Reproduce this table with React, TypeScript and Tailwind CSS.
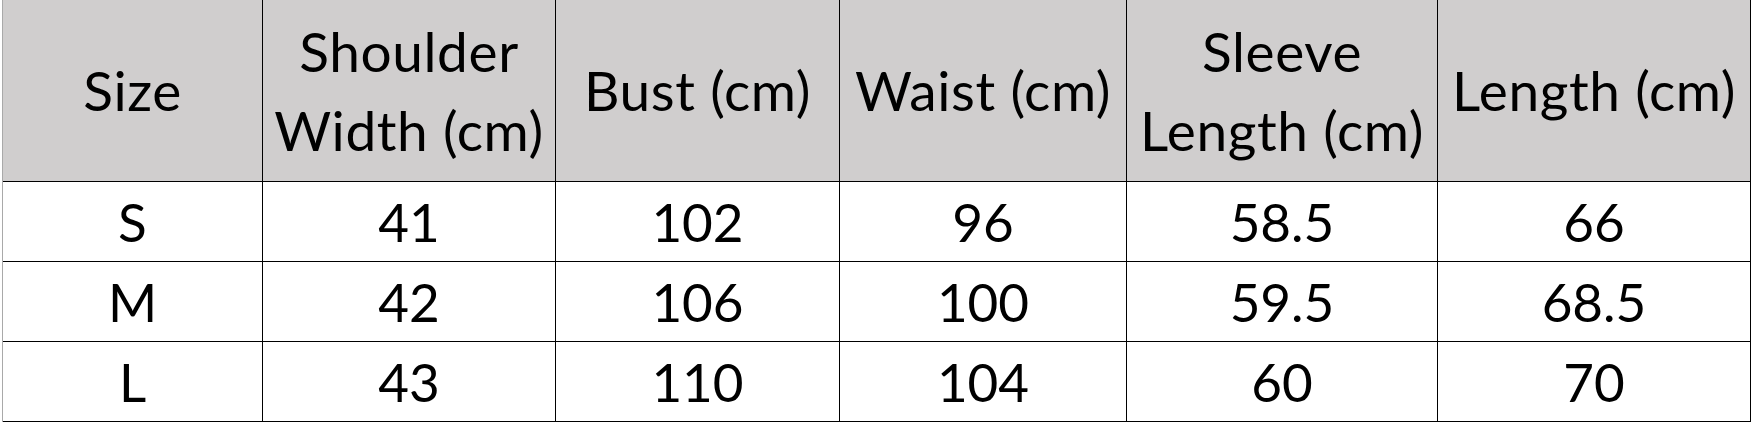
const headers = [
  ['Size'],
  ['Shoulder', 'Width (cm)'],
  ['Bust (cm)'],
  ['Waist (cm)'],
  ['Sleeve', 'Length (cm)'],
  ['Length (cm)'],
];

const rows = [
  ['S', '41', '102', '96', '58.5', '66'],
  ['M', '42', '106', '100', '59.5', '68.5'],
  ['L', '43', '110', '104', '60', '70'],
];

export default function App() {
  return (
    <div className="w-[1751px] h-[425px] bg-white pl-[2px] font-['Lato','Open_Sans',sans-serif] text-black">
      <div className="inline-block border-l border-[#a9a9a9]">
        <div className="grid grid-cols-[259px_292px_283px_286px_310px_312px] grid-rows-[181px_79px_79px_79px] gap-px bg-black pr-px pb-px">
          {headers.map((lines, i) => (
            <div key={i} className="bg-[#d0cece] flex flex-col items-center justify-center text-[55px] leading-[79px] tracking-[0.6px]">
              {lines.map((l) => (
                <span key={l} className="whitespace-nowrap">{l}</span>
              ))}
            </div>
          ))}
          {rows.map((r) =>
            r.map((v, j) => (
              <div key={r[0] + j} className="bg-white flex items-center justify-center text-[53px] leading-none">
                {v}
              </div>
            ))
          )}
        </div>
      </div>
    </div>
  );
}
